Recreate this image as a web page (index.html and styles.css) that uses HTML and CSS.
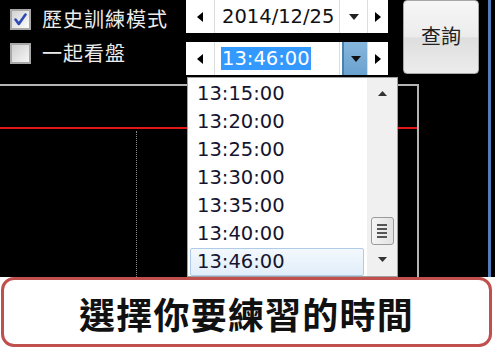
FILE: index.html
```html
<!DOCTYPE html>
<html lang="zh-Hant">
<head>
<meta charset="utf-8">
<link rel="stylesheet" href="styles.css">
</head>
<body>
<div class="screen">
  <div class="main">
    <div class="toolbar">
      <div class="checks">
        <label class="check-row">
          <svg class="cb" width="21" height="21" viewBox="0 0 21 21"><defs><linearGradient id="g1" x1="0" y1="0" x2="1" y2="1"><stop offset="0" stop-color="#d0d0d0"/><stop offset="1" stop-color="#ffffff"/></linearGradient></defs><rect x="1" y="1" width="19" height="19" fill="url(#g1)" stroke="#a8a8a8" stroke-width="2"/><path d="M5.5 10.5 L8.8 15 L15.5 5.5" fill="none" stroke="#2c49b8" stroke-width="2.6" stroke-linecap="round" stroke-linejoin="round"/></svg>
          <span class="check-text">歷史訓練模式</span>
        </label>
        <label class="check-row">
          <svg class="cb" width="21" height="21" viewBox="0 0 21 21"><defs><linearGradient id="g2" x1="0" y1="0" x2="1" y2="1"><stop offset="0" stop-color="#cccccc"/><stop offset="1" stop-color="#f8f8f8"/></linearGradient></defs><rect x="1" y="1" width="19" height="19" fill="url(#g2)" stroke="#a8a8a8" stroke-width="2"/></svg>
          <span class="check-text">一起看盤</span>
        </label>
      </div>
      <div class="pickers">
        <div class="picker">
          <div class="seg arrow"><svg width="6" height="10" viewBox="0 0 6 10"><path d="M6 0 L0 5 L6 10 Z" fill="#000"/></svg></div>
          <div class="seg field"><span class="value">2014/12/25</span></div>
          <div class="seg drop"><svg width="10" height="6" viewBox="0 0 10 6"><path d="M0 0 L10 0 L5 6 Z" fill="#222"/></svg></div>
          <div class="seg arrow right"><svg width="6" height="10" viewBox="0 0 6 10"><path d="M0 0 L6 5 L0 10 Z" fill="#000"/></svg></div>
        </div>
        <div class="picker">
          <div class="seg arrow"><svg width="6" height="10" viewBox="0 0 6 10"><path d="M6 0 L0 5 L6 10 Z" fill="#000"/></svg></div>
          <div class="seg field"><span class="value selected">13:46:00</span></div>
          <div class="seg drop pressed"><svg width="10" height="6" viewBox="0 0 10 6"><path d="M0 0 L10 0 L5 6 Z" fill="#111"/></svg></div>
          <div class="seg arrow right"><svg width="6" height="10" viewBox="0 0 6 10"><path d="M0 0 L6 5 L0 10 Z" fill="#000"/></svg></div>
        </div>
      </div>
      <button class="query">查詢</button>
    </div>
    <div class="chart">
      <div class="red-line"></div>
      <div class="plot"></div>
    </div>
    <div class="dropdown">
      <ul class="items">
        <li>13:15:00</li>
        <li>13:20:00</li>
        <li>13:25:00</li>
        <li>13:30:00</li>
        <li>13:35:00</li>
        <li>13:40:00</li>
        <li class="current">13:46:00</li>
      </ul>
      <div class="scrollbar">
        <svg class="sarrow" width="9" height="5" viewBox="0 0 9 5"><path d="M0 5 L4.5 0 L9 5 Z" fill="#333"/></svg>
        <div class="track">
          <div class="thumb">
            <span></span><span></span><span></span><span></span>
          </div>
        </div>
        <svg class="sarrow" width="9" height="5" viewBox="0 0 9 5"><path d="M0 0 L9 0 L4.5 5 Z" fill="#333"/></svg>
      </div>
    </div>
  </div>
  <div class="edge"></div>
</div>
<div class="caption-area">
  <div class="caption">選擇你要練習的時間</div>
</div>
</body>
</html>
```
FILE: styles.css
```css
* { box-sizing: border-box; }
html, body { margin: 0; padding: 0; }
body {
  width: 495px;
  height: 359px;
  background: #ffffff;
  font-family: "DejaVu Sans", "Noto Sans CJK TC", sans-serif;
  overflow: hidden;
}
.screen {
  display: flex;
  height: 277px;
  background: #000;
}
.main {
  position: relative;
  width: 488px;
  height: 277px;
}
.edge {
  width: 3px;
  background: #4f7db8;
}
.toolbar {
  display: flex;
  height: 84px;
}
.checks {
  width: 186px;
  padding: 8px 0 0 10px;
  display: flex;
  flex-direction: column;
  gap: 12px;
}
.check-row {
  display: flex;
  align-items: center;
  gap: 11px;
  height: 22px;
}
.cb { display: block; flex: none; }
.check-text {
  font-family: "Noto Sans CJK TC", sans-serif;
  font-size: 20px;
  letter-spacing: 1px;
  color: #ececec;
  line-height: 22px;
}
.pickers {
  width: 202px;
  display: flex;
  flex-direction: column;
  gap: 9px;
}
.picker {
  display: flex;
  height: 33px;
  background: #fff;
}
.seg {
  display: flex;
  align-items: center;
  justify-content: center;
  border-right: 1px solid #dcdcdc;
}
.seg:last-child { border-right: none; }
.arrow { width: 29px; }
.arrow.right { width: 20px; }
.field {
  width: 125px;
  justify-content: flex-start;
  padding-left: 6px;
}
.drop { width: 28px; }
.drop.pressed {
  background: linear-gradient(#86b6dd, #6aa2cf);
  border-left: 2px solid #4a7fae;
  margin-left: 2px;
  width: 26px;
}
.value {
  font-size: 19.5px;
  color: #111;
  line-height: 23px;
  padding: 0 1px;
}
.value.selected {
  background: #3399ff;
  color: #fff;
}
.query {
  margin-left: 15px;
  width: 76px;
  height: 74px;
  border: 1px solid #a8a8a8;
  border-radius: 4px;
  background: linear-gradient(#f6f6f6 0%, #ececec 50%, #dedede 51%, #ececec 100%);
  font-family: "Noto Sans CJK TC", sans-serif;
  font-size: 20px;
  color: #222;
  padding: 0 0 4px;
}
.chart {
  width: 419px;
  height: 193px;
  border-top: 2px solid #b4b4b4;
  border-right: 2px solid #b4b4b4;
  display: flex;
  flex-direction: column;
}
.red-line {
  margin-top: 41px;
  height: 2px;
  background: #e01818;
}
.plot {
  flex: 1;
  margin: 2px 0 0 136px;
  border-left: 1px dotted #8a8a8a;
}
.dropdown {
  position: absolute;
  left: 187px;
  top: 77px;
  width: 211px;
  height: 200px;
  background: #fff;
  border: 1px solid #a0a0a0;
  display: flex;
}
.items {
  list-style: none;
  margin: 0;
  padding: 2px 3px 0 2px;
  flex: 1;
}
.items li {
  height: 28px;
  line-height: 28px;
  padding-left: 7px;
  font-size: 19.5px;
  color: #151530;
}
.items li.current {
  background: linear-gradient(#f3f8fd, #e2eefa);
  border: 1px solid #aecbe8;
  border-radius: 2px;
  line-height: 26px;
  padding-left: 6px;
}
.scrollbar {
  width: 30px;
  background: #f0f0f0;
  display: flex;
  flex-direction: column;
  align-items: center;
  padding: 13px 0 14px;
}
.sarrow { display: block; flex: none; }
.track {
  flex: 1;
  width: 100%;
  display: flex;
  align-items: flex-end;
  justify-content: center;
  padding-bottom: 12px;
}
.thumb {
  width: 23px;
  height: 28px;
  border: 1px solid #9a9a9a;
  border-radius: 3px;
  background: linear-gradient(90deg, #f4f4f4, #e2e2e2);
  display: flex;
  flex-direction: column;
  align-items: center;
  justify-content: center;
  gap: 2px;
}
.thumb span {
  width: 10px;
  height: 2px;
  background: #555;
}
.caption-area {
  height: 82px;
  padding: 0 3px 12px 1px;
}
.caption {
  height: 70px;
  border: 3px solid #c0504d;
  border-radius: 13px;
  background: #fff;
  display: flex;
  align-items: center;
  justify-content: center;
  font-family: "Noto Sans CJK TC", sans-serif;
  font-weight: bold;
  font-size: 36px;
  letter-spacing: 1.2px;
  color: #111;
  padding-top: 1px;
}
```
